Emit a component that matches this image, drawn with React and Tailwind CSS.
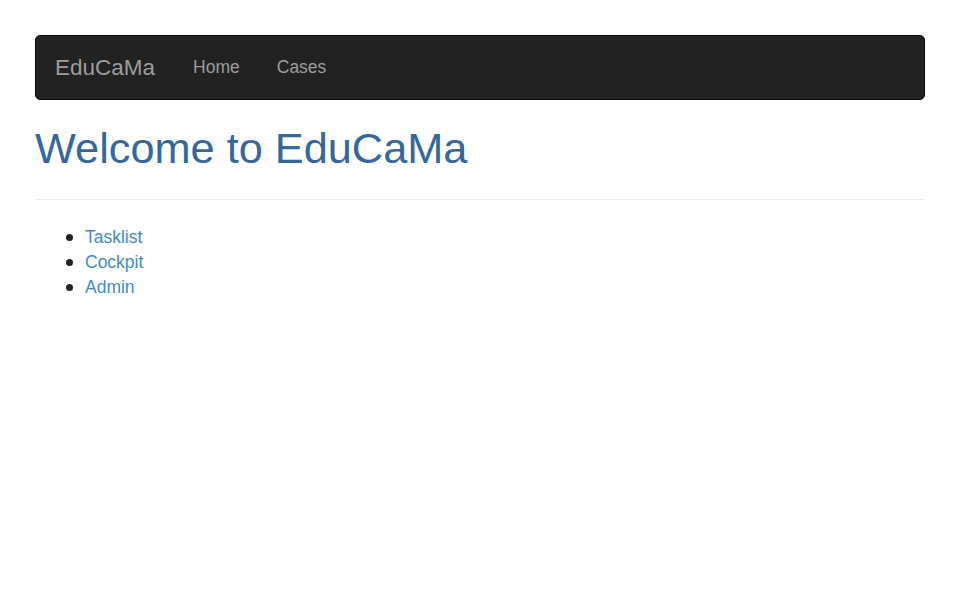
export default function App() {
  const links = ["Tasklist", "Cockpit", "Admin"]

  return (
    <div className="min-h-screen bg-white px-[35px] pt-[35px] font-['Liberation_Sans',Arial,sans-serif] text-[#333]">
      <nav className="flex h-[65px] items-center rounded-[5px] border border-[#080808] bg-[#222]">
        <a href="#" className="px-[19px] text-[22.5px] leading-[25px] text-[#9d9d9d]">
          EduCaMa
        </a>
        <a href="#" className="px-[19px] text-[17.5px] leading-[25px] text-[#9d9d9d]">
          Home
        </a>
        <a href="#" className="px-[18px] text-[17.5px] leading-[25px] text-[#9d9d9d]">
          Cases
        </a>
      </nav>

      <div className="mt-[25px] border-b border-[#eee] pb-[26px]">
        <h1 className="text-[43.3px] leading-[1.1] font-normal text-[#35689a]">
          Welcome to EduCaMa
        </h1>
      </div>

      <ul className="mt-[25px] pl-[31px] text-[17.5px] leading-[25px]">
        {links.map((label) => (
          <li key={label} className="flex items-center gap-[12px]">
            <span className="h-[7px] w-[7px] rounded-full bg-[#222]" />
            <a href="#" className="text-[#428bca]">
              {label}
            </a>
          </li>
        ))}
      </ul>
    </div>
  )
}
